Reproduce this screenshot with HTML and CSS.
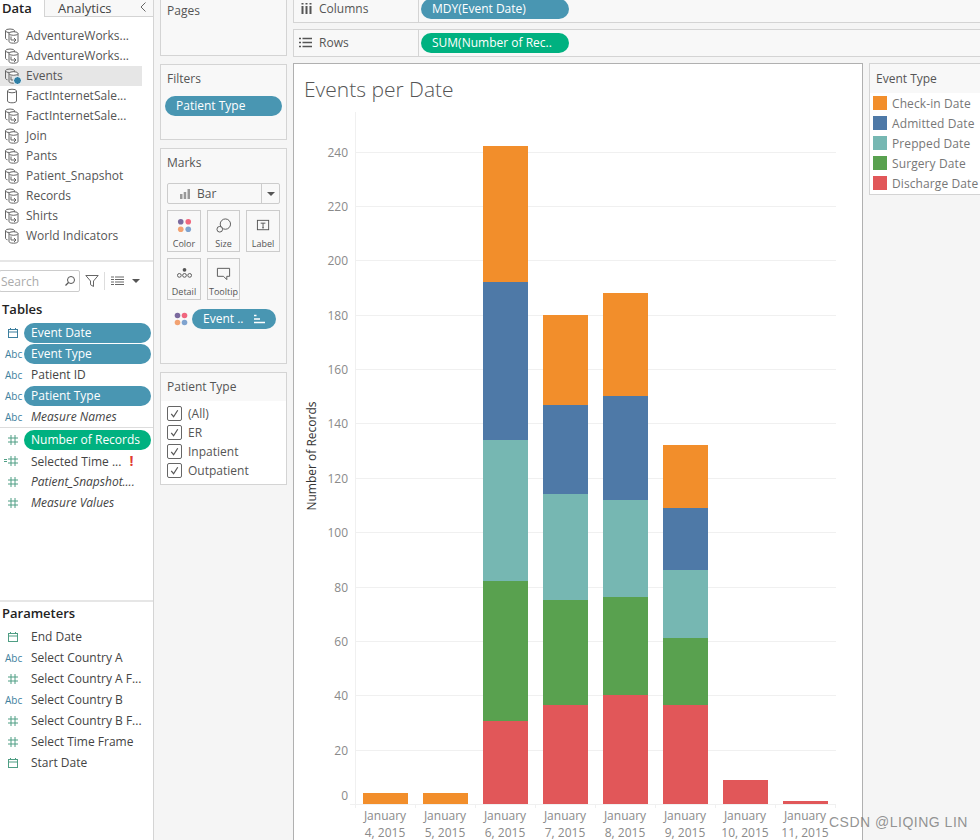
FILE: index.html
```html
<!DOCTYPE html>
<html lang="en">
<head>
<meta charset="utf-8">
<title>Events per Date</title>
<link rel="stylesheet" href="styles.css">
</head>
<body>
<svg class="sprite" aria-hidden="true">
  <symbol id="ds" viewBox="0 0 16 16"><g fill="none" stroke="#666" stroke-width="1"><ellipse cx="6" cy="2.800" rx="4.500" ry="1.800"/><path d="M1.500 2.800v7.400c0 .8.900 1.400 2 1.600M10.500 2.800v1"/><ellipse cx="9.500" cy="5.500" rx="4.500" ry="1.800" fill="#fff"/><path d="M5 5.500v8c0 1 2 1.700 4.500 1.700s4.500-.7 4.500-1.700v-8"/><path d="M7 8.500v3.500h4.500M10 10l2 2-2 2" /></g></symbol>
  <symbol id="cyl" viewBox="0 0 16 16"><g fill="none" stroke="#666" stroke-width="1"><ellipse cx="8" cy="3" rx="4.500" ry="1.800"/><path d="M3.500 3v10c0 1 2 1.800 4.500 1.800s4.500-.8 4.500-1.800V3"/></g></symbol>
  <symbol id="hash" viewBox="0 0 12 12"><path d="M4 1v10M8 1v10M1 4h10M1 8h10" fill="none" stroke="#4f9e84" stroke-width="1"/></symbol>
  <symbol id="cal" viewBox="0 0 12 12"><g fill="none" stroke="#4f9e84" stroke-width="1"><rect x="1.500" y="2.500" width="9" height="8"/><path d="M1.500 5h9M3.500 1v2M8.500 1v2"/></g></symbol>
  <symbol id="calb" viewBox="0 0 12 12"><g fill="none" stroke="#3d7f9e" stroke-width="1"><rect x="1.500" y="2.500" width="9" height="8"/><path d="M1.500 5h9M3.500 1v2M8.500 1v2"/></g></symbol>
  <symbol id="check" viewBox="0 0 14 14"><path d="M3.500 7.500 6 10.500 10.500 3.500" fill="none" stroke="#555" stroke-width="1.300"/></symbol>
</svg>

<div class="app">
  <aside class="data-pane">
    <div class="tabs">
      <div class="tab tab-active">Data</div>
      <div class="tab tab-other">Analytics<svg class="collapse" viewBox="0 0 6 10"><path d="M5.500 .5 1 5l4.500 4.500" fill="none" stroke="#666"/></svg></div>
    </div>
    <ul class="sources">
      <li class="source"><svg class="source-icon"><use href="#ds"/></svg>AdventureWorks...</li>
      <li class="source"><svg class="source-icon"><use href="#ds"/></svg>AdventureWorks...</li>
      <li class="source source-active"><svg class="source-icon"><use href="#ds"/></svg><span class="live-badge"></span>Events</li>
      <li class="source"><svg class="source-icon"><use href="#cyl"/></svg>FactInternetSale...</li>
      <li class="source"><svg class="source-icon"><use href="#ds"/></svg>FactInternetSale...</li>
      <li class="source"><svg class="source-icon"><use href="#ds"/></svg>Join</li>
      <li class="source"><svg class="source-icon"><use href="#ds"/></svg>Pants</li>
      <li class="source"><svg class="source-icon"><use href="#ds"/></svg>Patient_Snapshot</li>
      <li class="source"><svg class="source-icon"><use href="#ds"/></svg>Records</li>
      <li class="source"><svg class="source-icon"><use href="#ds"/></svg>Shirts</li>
      <li class="source"><svg class="source-icon"><use href="#ds"/></svg>World Indicators</li>
    </ul>
    <div class="search-row">
      <div class="search"><span>Search</span>
        <svg class="search-icon" viewBox="0 0 12 12"><circle cx="7" cy="5" r="3.500" fill="none" stroke="#555"/><path d="M4.500 7.500 1.500 10.500" stroke="#555" stroke-width="1.300"/></svg>
      </div>
      <svg class="funnel" viewBox="0 0 14 14"><path d="M.8 1.500h12.400L8.500 7v5.500l-3-1.800V7z" fill="none" stroke="#666"/></svg>
      <span class="search-sep"></span>
      <svg class="list-icon" viewBox="0 0 13 10"><path d="M0 1h3M4 1h9M0 3.500h3M4 3.500h9M0 6h3M4 6h9M0 8.500h3M4 8.500h9" stroke="#666" stroke-width="1"/></svg>
      <span class="caret"></span>
    </div>
    <h2 class="section-title tables-title">Tables</h2>
    <ul class="fields">
      <li class="field"><svg class="f-icon"><use href="#calb"/></svg><span class="name pill-blue">Event Date</span></li>
      <li class="field"><span class="abc">Abc</span><span class="name pill-blue">Event Type</span></li>
      <li class="field"><span class="abc">Abc</span><span class="name">Patient ID</span></li>
      <li class="field"><span class="abc">Abc</span><span class="name pill-blue">Patient Type</span></li>
      <li class="field"><span class="abc">Abc</span><span class="name italic">Measure Names</span></li>
    </ul>
    <div class="field-divider"></div>
    <ul class="fields">
      <li class="field"><svg class="f-icon"><use href="#hash"/></svg><span class="name pill-green">Number of Records</span></li>
      <li class="field"><span class="calc-mark"></span><svg class="f-icon"><use href="#hash"/></svg><span class="name">Selected Time ...<b class="alert">!</b></span></li>
      <li class="field"><svg class="f-icon"><use href="#hash"/></svg><span class="name italic">Patient_Snapshot....</span></li>
      <li class="field"><svg class="f-icon"><use href="#hash"/></svg><span class="name italic">Measure Values</span></li>
    </ul>
    <div class="params">
      <h2 class="section-title">Parameters</h2>
      <ul class="fields">
        <li class="field"><svg class="f-icon"><use href="#cal"/></svg><span class="name">End Date</span></li>
        <li class="field"><span class="abc">Abc</span><span class="name">Select Country A</span></li>
        <li class="field"><svg class="f-icon"><use href="#hash"/></svg><span class="name">Select Country A F...</span></li>
        <li class="field"><span class="abc">Abc</span><span class="name">Select Country B</span></li>
        <li class="field"><svg class="f-icon"><use href="#hash"/></svg><span class="name">Select Country B F...</span></li>
        <li class="field"><svg class="f-icon"><use href="#hash"/></svg><span class="name">Select Time Frame</span></li>
        <li class="field"><svg class="f-icon"><use href="#cal"/></svg><span class="name">Start Date</span></li>
      </ul>
    </div>
  </aside>

  <section class="cards">
    <div class="card pages"><h3 class="card-title">Pages</h3></div>
    <div class="card filters">
      <h3 class="card-title">Filters</h3>
      <div class="filter-pill">Patient Type</div>
    </div>
    <div class="card marks">
      <h3 class="card-title">Marks</h3>
      <div class="mark-select">
        <svg class="bar-icon" viewBox="0 0 10 10"><path d="M0 5h2.500v5H0zM3.700 3h2.500v7H3.700zM7.500 0H10v10H7.500z" fill="#999"/></svg>
        <span class="mark-label">Bar</span>
        <span class="mark-drop"><span class="caret"></span></span>
      </div>
      <div class="mark-grid">
        <div class="mark-btn"><svg class="mark-icon" viewBox="0 0 16 16"><circle cx="4" cy="4" r="3" fill="#7b6a9e"/><circle cx="12" cy="4" r="3" fill="#f0667e"/><circle cx="4" cy="12" r="3" fill="#f2a272"/><circle cx="12" cy="12" r="3" fill="#7fa3cf"/></svg><span>Color</span></div>
        <div class="mark-btn"><svg class="mark-icon" viewBox="0 0 16 16"><circle cx="10" cy="6.500" r="5.500" fill="none" stroke="#555"/><circle cx="4" cy="12" r="3" fill="#f8f8f8" stroke="#555"/></svg><span>Size</span></div>
        <div class="mark-btn"><svg class="mark-icon" viewBox="0 0 16 16"><rect x="1.500" y="2.500" width="12" height="10" fill="none" stroke="#555"/><path d="M5 5.500h5M7.500 5.500v5M6.500 10.500h2" fill="none" stroke="#555"/></svg><span>Label</span></div>
        <div class="mark-btn"><svg class="mark-icon" viewBox="0 0 16 16"><circle cx="8" cy="4" r="2" fill="#555"/><circle cx="2.500" cy="10" r="2" fill="none" stroke="#555"/><circle cx="8" cy="10" r="2" fill="none" stroke="#555"/><circle cx="13.500" cy="10" r="2" fill="none" stroke="#555"/></svg><span>Detail</span></div>
        <div class="mark-btn"><svg class="mark-icon" viewBox="0 0 16 16"><path d="M1.500 2.500h13v8.500h-3v3.500l-3.500-3.500h-6.500z" fill="none" stroke="#555"/></svg><span>Tooltip</span></div>
      </div>
      <div class="mark-field">
        <svg class="mark-dots" viewBox="0 0 16 16"><circle cx="4" cy="4" r="3.200" fill="#7b6a9e"/><circle cx="12" cy="4" r="3.200" fill="#f0667e"/><circle cx="4" cy="12" r="3.200" fill="#f2a272"/><circle cx="12" cy="12" r="3.200" fill="#7fa3cf"/></svg>
        <div class="mark-pill">Event ..<svg class="sort-icon" viewBox="0 0 11 10"><path d="M0 1.500h2.500M0 5h6M0 8.500h11" stroke="#fff" stroke-width="1.600"/></svg></div>
      </div>
    </div>
    <div class="card qf">
      <h3 class="qf-title">Patient Type</h3>
      <ul class="qf-list">
        <li class="qf-item"><span class="box"><svg class="tick"><use href="#check"/></svg></span>(All)</li>
        <li class="qf-item"><span class="box"><svg class="tick"><use href="#check"/></svg></span>ER</li>
        <li class="qf-item"><span class="box"><svg class="tick"><use href="#check"/></svg></span>Inpatient</li>
        <li class="qf-item"><span class="box"><svg class="tick"><use href="#check"/></svg></span>Outpatient</li>
      </ul>
    </div>
  </section>

  <main class="workspace">
    <div class="shelf shelf-columns">
      <div class="shelf-label">
        <svg class="shelf-icon" viewBox="0 0 11 11"><path d="M1.500 3v8M5.500 3v8M9.500 3v8" stroke="#555" stroke-width="2"/><path d="M.5 .7h2M4.500 .7h2M8.500 .7h2" stroke="#555" stroke-width="1.400"/></svg>
        Columns</div>
      <div class="shelf-body"><span class="shelf-pill pill-blue-shelf">MDY(Event Date)</span></div>
    </div>
    <div class="shelf shelf-rows">
      <div class="shelf-label">
        <svg class="shelf-icon" viewBox="0 0 13 11"><path d="M3.500 1.500H13M3.500 5.500H13M3.500 9.500H13M0 1.500h2M0 5.500h2M0 9.500h2" stroke="#555" stroke-width="1.600"/></svg>
        Rows</div>
      <div class="shelf-body"><span class="shelf-pill pill-green-shelf">SUM(Number of Rec..</span></div>
    </div>
    <div class="view-row">
      <div class="view">
        <h1 class="view-title">Events per Date</h1>
        <svg class="chart" viewBox="294 100 568 740" role="img" aria-label="Stacked bar chart of events per date">
          <g class="grid">
            <path d="M355.500 112V804"/>
            <path d="M355 152.500H836M355 206.500H836M355 260.500H836M355 315.500H836M355 369.500H836M355 423.500H836M355 478.500H836M355 532.500H836M355 587.500H836M355 641.500H836M355 695.500H836M355 750.500H836"/>
            <path d="M350 804.500H836M355.500 804v4M415.500 804v4M475.500 804v4M535.500 804v4M595.500 804v4M655.500 804v4M715.500 804v4M775.500 804v4M835.500 804v4"/>
          </g>
          <g class="y-labels">
            <text x="348" y="157">240</text><text x="348" y="211">220</text><text x="348" y="265">200</text>
            <text x="348" y="320">180</text><text x="348" y="374">160</text><text x="348" y="428">140</text>
            <text x="348" y="483">120</text><text x="348" y="537">100</text><text x="348" y="592">80</text>
            <text x="348" y="646">60</text><text x="348" y="700">40</text><text x="348" y="755">20</text>
            <text x="348" y="800">0</text>
          </g>
          <text class="y-title" transform="translate(316 456) rotate(-90)">Number of Records</text>
          <g class="orange">
            <rect x="363" y="793" width="45" height="11"/><rect x="423" y="793" width="45" height="11"/>
            <rect x="483" y="146" width="45" height="136"/><rect x="543" y="315" width="45" height="90"/>
            <rect x="603" y="293" width="45" height="103"/><rect x="663" y="445" width="45" height="63"/>
          </g>
          <g class="blue">
            <rect x="483" y="282" width="45" height="158"/><rect x="543" y="405" width="45" height="89"/>
            <rect x="603" y="396" width="45" height="104"/><rect x="663" y="508" width="45" height="62"/>
          </g>
          <g class="teal">
            <rect x="483" y="440" width="45" height="141"/><rect x="543" y="494" width="45" height="106"/>
            <rect x="603" y="500" width="45" height="97"/><rect x="663" y="570" width="45" height="68"/>
          </g>
          <g class="green">
            <rect x="483" y="581" width="45" height="140"/><rect x="543" y="600" width="45" height="105"/>
            <rect x="603" y="597" width="45" height="98"/><rect x="663" y="638" width="45" height="67"/>
          </g>
          <g class="red">
            <rect x="483" y="721" width="45" height="83"/><rect x="543" y="705" width="45" height="99"/>
            <rect x="603" y="695" width="45" height="109"/><rect x="663" y="705" width="45" height="99"/>
            <rect x="723" y="780" width="45" height="24"/><rect x="783" y="801" width="45" height="3"/>
          </g>
          <g class="x-labels">
            <text x="385" y="820">January</text><text x="385" y="837">4, 2015</text>
            <text x="445" y="820">January</text><text x="445" y="837">5, 2015</text>
            <text x="505" y="820">January</text><text x="505" y="837">6, 2015</text>
            <text x="565" y="820">January</text><text x="565" y="837">7, 2015</text>
            <text x="625" y="820">January</text><text x="625" y="837">8, 2015</text>
            <text x="685" y="820">January</text><text x="685" y="837">9, 2015</text>
            <text x="745" y="820">January</text><text x="745" y="837">10, 2015</text>
            <text x="805" y="820">January</text><text x="805" y="837">11, 2015</text>
          </g>
        </svg>
      </div>
      <aside class="legend">
        <h3 class="legend-title">Event Type</h3>
        <ul class="legend-list">
          <li class="legend-item"><span class="swatch sw-orange"></span>Check-in Date</li>
          <li class="legend-item"><span class="swatch sw-blue"></span>Admitted Date</li>
          <li class="legend-item"><span class="swatch sw-teal"></span>Prepped Date</li>
          <li class="legend-item"><span class="swatch sw-green"></span>Surgery Date</li>
          <li class="legend-item"><span class="swatch sw-red"></span>Discharge Date</li>
        </ul>
      </aside>
    </div>
  </main>
</div>
<div class="watermark">CSDN @LIQING LIN</div>
</body>
</html>
```

FILE: styles.css
```css
* { box-sizing: border-box; }
html, body { margin: 0; padding: 0; height: 840px; overflow: hidden; }
body { background: #f5f5f5; color: #444; font-family: "Open Sans", "Noto Sans", sans-serif; font-size: 12px; position: relative; }
ul { list-style: none; margin: 0; padding: 0; }
h1, h2, h3 { margin: 0; font-weight: 400; }
.sprite { position: absolute; width: 0; height: 0; }

.app { display: flex; width: 980px; height: 840px; }

/* Data pane */
.data-pane { width: 154px; flex: none; background: #fff; border-right: 1px solid #d4d4d4; position: relative; }
.tabs { display: flex; height: 17px; }
.tab { font-size: 13px; line-height: 16px; }
.tab-active { width: 45px; padding-left: 2px; font-weight: 600; color: #222; border-right: 1px solid #d4d4d4; }
.tab-other { flex: 1; padding-left: 13px; background: #f8f8f8; border-bottom: 1px solid #d4d4d4; color: #444; position: relative; display: flex; align-items: flex-start; }
.collapse { position: absolute; right: 7px; top: 2px; width: 6px; height: 10px; }

.sources { padding-top: 9px; height: 245px; border-bottom: 2px solid #e6e6e6; }
.source { height: 20px; display: flex; align-items: center; padding-left: 26px; padding-bottom: 1px; position: relative; width: 142px; color: #555; }
.source-active { background: #e6e6e6; }
.source-icon { position: absolute; left: 4px; top: 2px; width: 16px; height: 16px; }
.live-badge { position: absolute; left: 13px; top: 10px; width: 7px; height: 7px; border-radius: 50%; background: #2f7fa5; border: 1px solid #fff; box-sizing: content-box; }

.search-row { display: flex; align-items: center; height: 22px; margin-top: 8px; position: relative; }
.search { width: 81px; height: 22px; margin-left: -1px; border: 1px solid #ccc; border-radius: 2px; display: flex; align-items: center; justify-content: space-between; padding: 0 3px 0 1px; color: #aaa; }
.search-icon { width: 12px; height: 12px; }
.funnel { width: 14px; height: 14px; margin-left: 5px; }
.search-sep { width: 1px; height: 18px; background: #ddd; margin-left: 5px; }
.list-icon { width: 13px; height: 10px; margin-left: 6px; }
.caret { display: inline-block; width: 0; height: 0; border-left: 4px solid transparent; border-right: 4px solid transparent; border-top: 4px solid #555; margin-left: 8px; }

.section-title { font-size: 13px; font-weight: 600; color: #222; padding-left: 2px; line-height: 18px; }
.tables-title { margin-top: 8px; margin-bottom: 4px; }
.field { height: 21px; display: flex; align-items: center; position: relative; }
.abc { width: 24px; flex: none; padding-left: 5px; font-size: 10px; color: #3d7f9e; }
.f-icon { width: 12px; height: 12px; margin: 0 5px 0 7px; flex: none; }
.calc-mark { position: absolute; left: 4px; top: 9px; width: 3px; height: 3px; border-top: 1px solid #4f9e84; border-bottom: 1px solid #4f9e84; }
.name { flex: none; width: 127px; height: 20px; line-height: 20px; border-radius: 10px; padding-left: 7px; white-space: nowrap; color: #444; }
.italic { font-style: italic; }
.pill-blue { background: #4996b2; color: #fff; }
.pill-green { background: #00b180; color: #fff; }
.alert { color: #e03c31; font-size: 14px; font-weight: 700; margin-left: 8px; }
.field-divider { height: 1px; background: #ddd; margin: 0 0 1px 0; }
.params { position: absolute; left: 0; right: 0; top: 600px; border-top: 2px solid #e6e6e6; padding-top: 2px; }
.params .section-title { margin-bottom: 4px; }

/* Cards */
.cards { width: 127px; flex: none; margin: 0 6px; display: flex; flex-direction: column; gap: 8px; }
.card { border: 1px solid #d4d4d4; background: #f8f8f8; padding: 0 6px; }
.card-title { font-size: 12px; color: #555; line-height: 16px; }
.pages { height: 56px; border-top: 0; padding-top: 3px; }
.filters { height: 76px; padding: 6px 6px 0; }
.filter-pill { margin: 9px 0 0 -2px; width: 117px; height: 20px; line-height: 20px; border-radius: 10px; background: #4996b2; color: #fff; padding-left: 11px; white-space: nowrap; }
.marks { height: 216px; padding-top: 6px; }
.mark-select { margin-top: 12px; height: 21px; border: 1px solid #ccc; border-radius: 2px; display: flex; align-items: center; background: #f8f8f8; }
.bar-icon { width: 10px; height: 10px; margin-left: 12px; }
.mark-label { margin-left: 7px; flex: 1; font-size: 12px; color: #555; }
.mark-drop { width: 18px; height: 19px; border-left: 1px solid #ccc; display: flex; align-items: center; justify-content: center; }
.mark-drop .caret { margin: 0; }
.mark-grid { display: grid; grid-template-columns: 34px 33px 34px; gap: 6px; margin-top: 6px; }
.mark-btn { height: 42px; border: 1px solid #ccc; background: #f8f8f8; display: flex; flex-direction: column; align-items: center; padding-top: 7px; font-size: 9px; color: #555; }
.mark-icon { width: 15px; height: 15px; margin-bottom: 4px; flex: none; }
.mark-field { display: flex; align-items: center; margin-top: 9px; }
.mark-dots { width: 14px; height: 14px; flex: none; margin-left: 7px; }
.mark-pill { margin-left: 4px; width: 84px; height: 20px; line-height: 20px; border-radius: 10px; background: #4996b2; color: #fff; padding-left: 11px; display: flex; align-items: center; }
.sort-icon { width: 11px; height: 10px; margin-left: 11px; }
.qf { height: 113px; padding: 0; background: #fff; }
.qf-title { height: 28px; line-height: 27px; background: #f8f8f8; padding-left: 6px; font-size: 12px; color: #555; }
.qf-list { padding: 3px 0 0 6px; }
.qf-item { height: 19px; display: flex; align-items: center; color: #555; }
.box { width: 15px; height: 15px; border: 1px solid #666; border-radius: 2px; margin-right: 6px; background: #fff; display: flex; flex: none; }
.tick { width: 13px; height: 13px; }

/* Workspace */
.workspace { flex: 1; min-width: 0; }
.shelf { display: flex; border: 1px solid #d4d4d4; border-right: 0; background: #f8f8f8; }
.shelf-columns { height: 23px; border-top: 0; margin-bottom: 6px; }
.shelf-rows { height: 28px; margin-bottom: 6px; }
.shelf-label { width: 125px; flex: none; border-right: 1px solid #d4d4d4; display: flex; align-items: center; gap: 7px; padding-left: 7px; color: #555; font-size: 12px; }
.shelf-columns .shelf-label { padding-bottom: 6px; }
.shelf-icon { width: 11px; height: 11px; flex: none; }
.shelf-rows .shelf-icon { width: 13px; margin-right: 0; margin-left: -2px; }
.shelf-rows .shelf-label { padding-bottom: 1px; }
.shelf-body { flex: 1; padding-left: 2px; }
.shelf-pill { display: block; width: 148px; height: 20px; line-height: 20px; border-radius: 10px; color: #fff; padding-left: 11px; white-space: nowrap; }
.shelf-columns .shelf-pill { margin-top: -1px; }
.shelf-rows .shelf-pill { margin-top: 3px; }
.pill-blue-shelf { background: #4996b2; }
.pill-green-shelf { background: #00b180; }

.view-row { display: flex; gap: 6px; align-items: flex-start; }
.view { width: 570px; height: 777px; flex: none; background: #fff; border: 1px solid #b0b0b0; border-bottom: 0; overflow: hidden; }
.view-title { height: 36px; padding: 11px 0 0 10px; font-size: 21px; line-height: 28px; color: #555; font-weight: 300; white-space: nowrap; }
.chart { display: block; width: 568px; height: 740px; }
.grid path { fill: none; stroke: #f0f0f0; stroke-width: 1; }
.y-labels text { font-size: 12px; fill: #8a8a8a; text-anchor: end; }
.x-labels text { font-size: 12px; fill: #8a8a8a; text-anchor: middle; }
.y-title { font-size: 12px; fill: #333; text-anchor: middle; }
.orange { fill: #f28e2b; }
.blue { fill: #4e79a7; }
.teal { fill: #76b7b2; }
.green { fill: #59a14f; }
.red { fill: #e15759; }

.legend { flex: 1; min-width: 0; height: 132px; background: #fff; border: 1px solid #d4d4d4; border-right: 0; overflow: hidden; }
.legend-title { height: 29px; line-height: 29px; padding-left: 6px; background: #f8f8f8; color: #555; font-size: 12px; }
.legend-item { height: 20px; display: flex; align-items: center; padding-left: 3px; color: #777; white-space: nowrap; letter-spacing: .1px; }
.swatch { width: 14px; height: 14px; margin-right: 5px; flex: none; }
.sw-orange { background: #f28e2b; }
.sw-blue { background: #4e79a7; }
.sw-teal { background: #76b7b2; }
.sw-green { background: #59a14f; }
.sw-red { background: #e15759; }

.watermark { position: absolute; left: 829px; top: 813px; font-family: "Liberation Sans", sans-serif; font-size: 14px; line-height: 18px; letter-spacing: .5px; color: rgba(120, 120, 120, .8); white-space: nowrap; }
```
